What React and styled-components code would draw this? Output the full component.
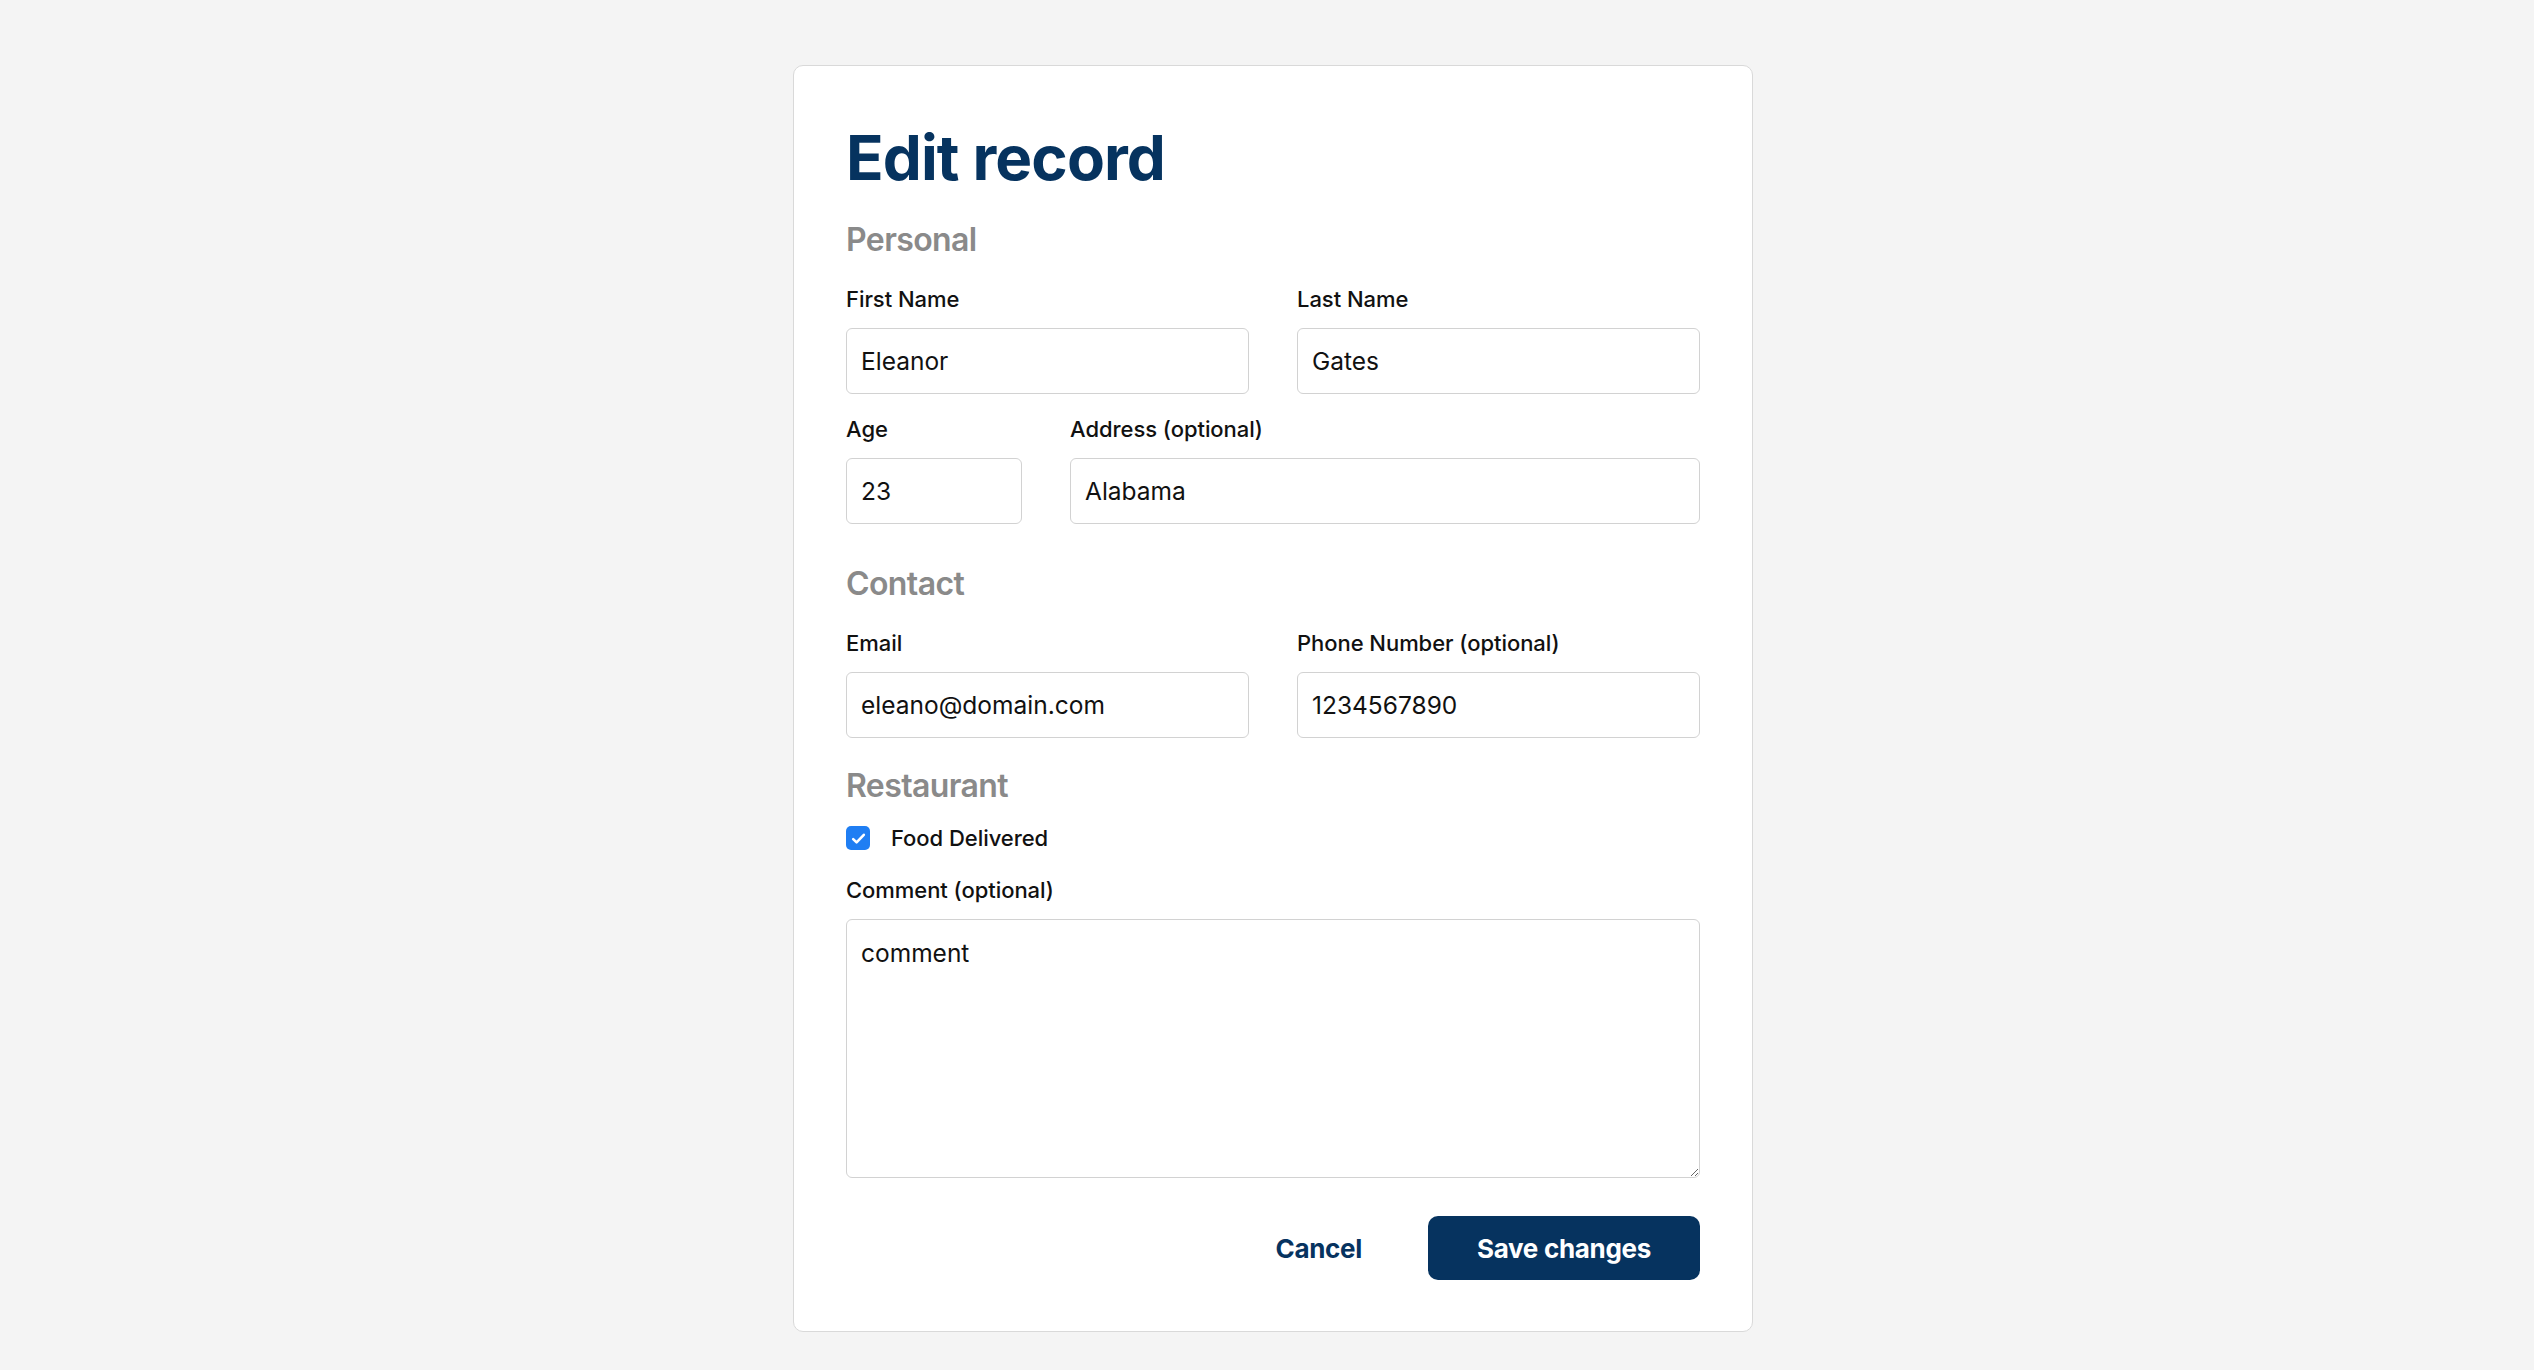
import React from 'react'
import styled, { createGlobalStyle } from 'styled-components'

const navy = '#06335f'

const GlobalStyle = createGlobalStyle`
  html, body {
    margin: 0;
    padding: 0;
    background: #f4f4f4;
    font-family: Inter, "Liberation Sans", Arial, sans-serif;
    color: #111;
  }
  * {
    box-sizing: border-box;
  }
`

const Page = styled.div`
  min-height: 1370px;
  display: flex;
  justify-content: center;
  align-items: flex-start;
  padding-top: 65px;
  padding-left: 12px;
`

const Card = styled.form`
  width: 960px;
  background: #ffffff;
  border: 1px solid #d9d9d9;
  border-radius: 10px;
  padding: 54px 52px 51px 52px;
  display: flex;
  flex-direction: column;
`

const Title = styled.h1`
  margin: 0;
  font-size: 62px;
  line-height: 76px;
  font-weight: 700;
  letter-spacing: -0.9px;
  color: ${navy};
`

const SectionTitle = styled.h2`
  margin: ${(props) => props.$top || 24}px 0 0 0;
  font-size: 32px;
  line-height: 40px;
  font-weight: 600;
  letter-spacing: -0.6px;
  color: #8a8a8a;
`

const Row = styled.div`
  display: grid;
  grid-template-columns: ${(props) => props.$cols || '1fr 1fr'};
  column-gap: 48px;
  margin-top: ${(props) => props.$top || 27}px;
`

const Field = styled.div`
  display: flex;
  flex-direction: column;
  gap: 17px;
`

const Label = styled.label`
  font-size: 22px;
  line-height: 24px;
  font-weight: 500;
  letter-spacing: -0.05px;
  color: #111;
`

const Input = styled.input`
  height: 66px;
  width: 100%;
  border: 1px solid #d2d2d2;
  border-radius: 6px;
  padding: 0 14px;
  font-family: inherit;
  font-size: 24.5px;
  color: #111;
  background: #fff;
  outline: none;
`

const TextArea = styled.textarea`
  height: 259px;
  width: 100%;
  border: 1px solid #d2d2d2;
  border-radius: 6px;
  padding: 16px 14px;
  font-family: inherit;
  font-size: 24.5px;
  line-height: 34px;
  color: #111;
  background: #fff;
  outline: none;
  resize: vertical;
`

const CheckRow = styled.label`
  display: flex;
  align-items: center;
  gap: 21px;
  margin-top: 20px;
  height: 24px;
  font-size: 22px;
  font-weight: 500;
  letter-spacing: -0.05px;
  cursor: pointer;
`

const HiddenCheck = styled.input`
  position: absolute;
  opacity: 0;
  width: 0;
  height: 0;
`

const CheckBox = styled.span`
  flex: none;
  width: 24px;
  height: 24px;
  border-radius: 5px;
  background: ${(props) => (props.$checked ? '#1f7ef3' : '#fff')};
  border: ${(props) => (props.$checked ? 'none' : '1px solid #888')};
  display: flex;
  align-items: center;
  justify-content: center;
`

const Actions = styled.div`
  display: flex;
  justify-content: flex-end;
  align-items: center;
  gap: 34px;
  margin-top: 38px;
`

const CancelButton = styled.button`
  border: none;
  background: none;
  padding: 0 32px;
  height: 64px;
  font-family: inherit;
  font-size: 26px;
  font-weight: 700;
  letter-spacing: -0.3px;
  color: ${navy};
  cursor: pointer;
`

const SaveButton = styled.button`
  border: none;
  width: 272px;
  height: 64px;
  border-radius: 10px;
  background: ${navy};
  font-family: inherit;
  font-size: 26px;
  font-weight: 700;
  letter-spacing: -0.3px;
  color: #fff;
  cursor: pointer;
`

const TextField = ({ label, value, type = 'text' }) => (
  <Field>
    <Label>{label}</Label>
    <Input type={type} defaultValue={value} />
  </Field>
)

export default function App() {
  const [delivered, setDelivered] = React.useState(true)

  return (
    <>
      <GlobalStyle />
      <Page>
        <Card onSubmit={(e) => e.preventDefault()}>
          <Title>Edit record</Title>

          <SectionTitle $top={24}>Personal</SectionTitle>
          <Row>
            <TextField label="First Name" value="Eleanor" />
            <TextField label="Last Name" value="Gates" />
          </Row>
          <Row $cols="176px 1fr" $top={23}>
            <TextField label="Age" value="23" />
            <TextField label="Address (optional)" value="Alabama" />
          </Row>

          <SectionTitle $top={40}>Contact</SectionTitle>
          <Row>
            <TextField label="Email" value="eleano@domain.com" />
            <TextField label="Phone Number (optional)" value="1234567890" />
          </Row>

          <SectionTitle $top={28}>Restaurant</SectionTitle>
          <CheckRow>
            <HiddenCheck
              type="checkbox"
              checked={delivered}
              onChange={() => setDelivered(!delivered)}
            />
            <CheckBox $checked={delivered}>
              {delivered && (
                <svg width="17" height="17" viewBox="0 0 16 16" fill="none">
                  <path
                    d="M3 8.5l3.2 3.2L13 4.5"
                    stroke="#fff"
                    strokeWidth="2.4"
                    strokeLinecap="round"
                    strokeLinejoin="round"
                  />
                </svg>
              )}
            </CheckBox>
            Food Delivered
          </CheckRow>
          <Row $cols="1fr" $top={28}>
            <Field>
              <Label>Comment (optional)</Label>
              <TextArea defaultValue="comment" />
            </Field>
          </Row>

          <Actions>
            <CancelButton type="button">Cancel</CancelButton>
            <SaveButton type="submit">Save changes</SaveButton>
          </Actions>
        </Card>
      </Page>
    </>
  )
}
